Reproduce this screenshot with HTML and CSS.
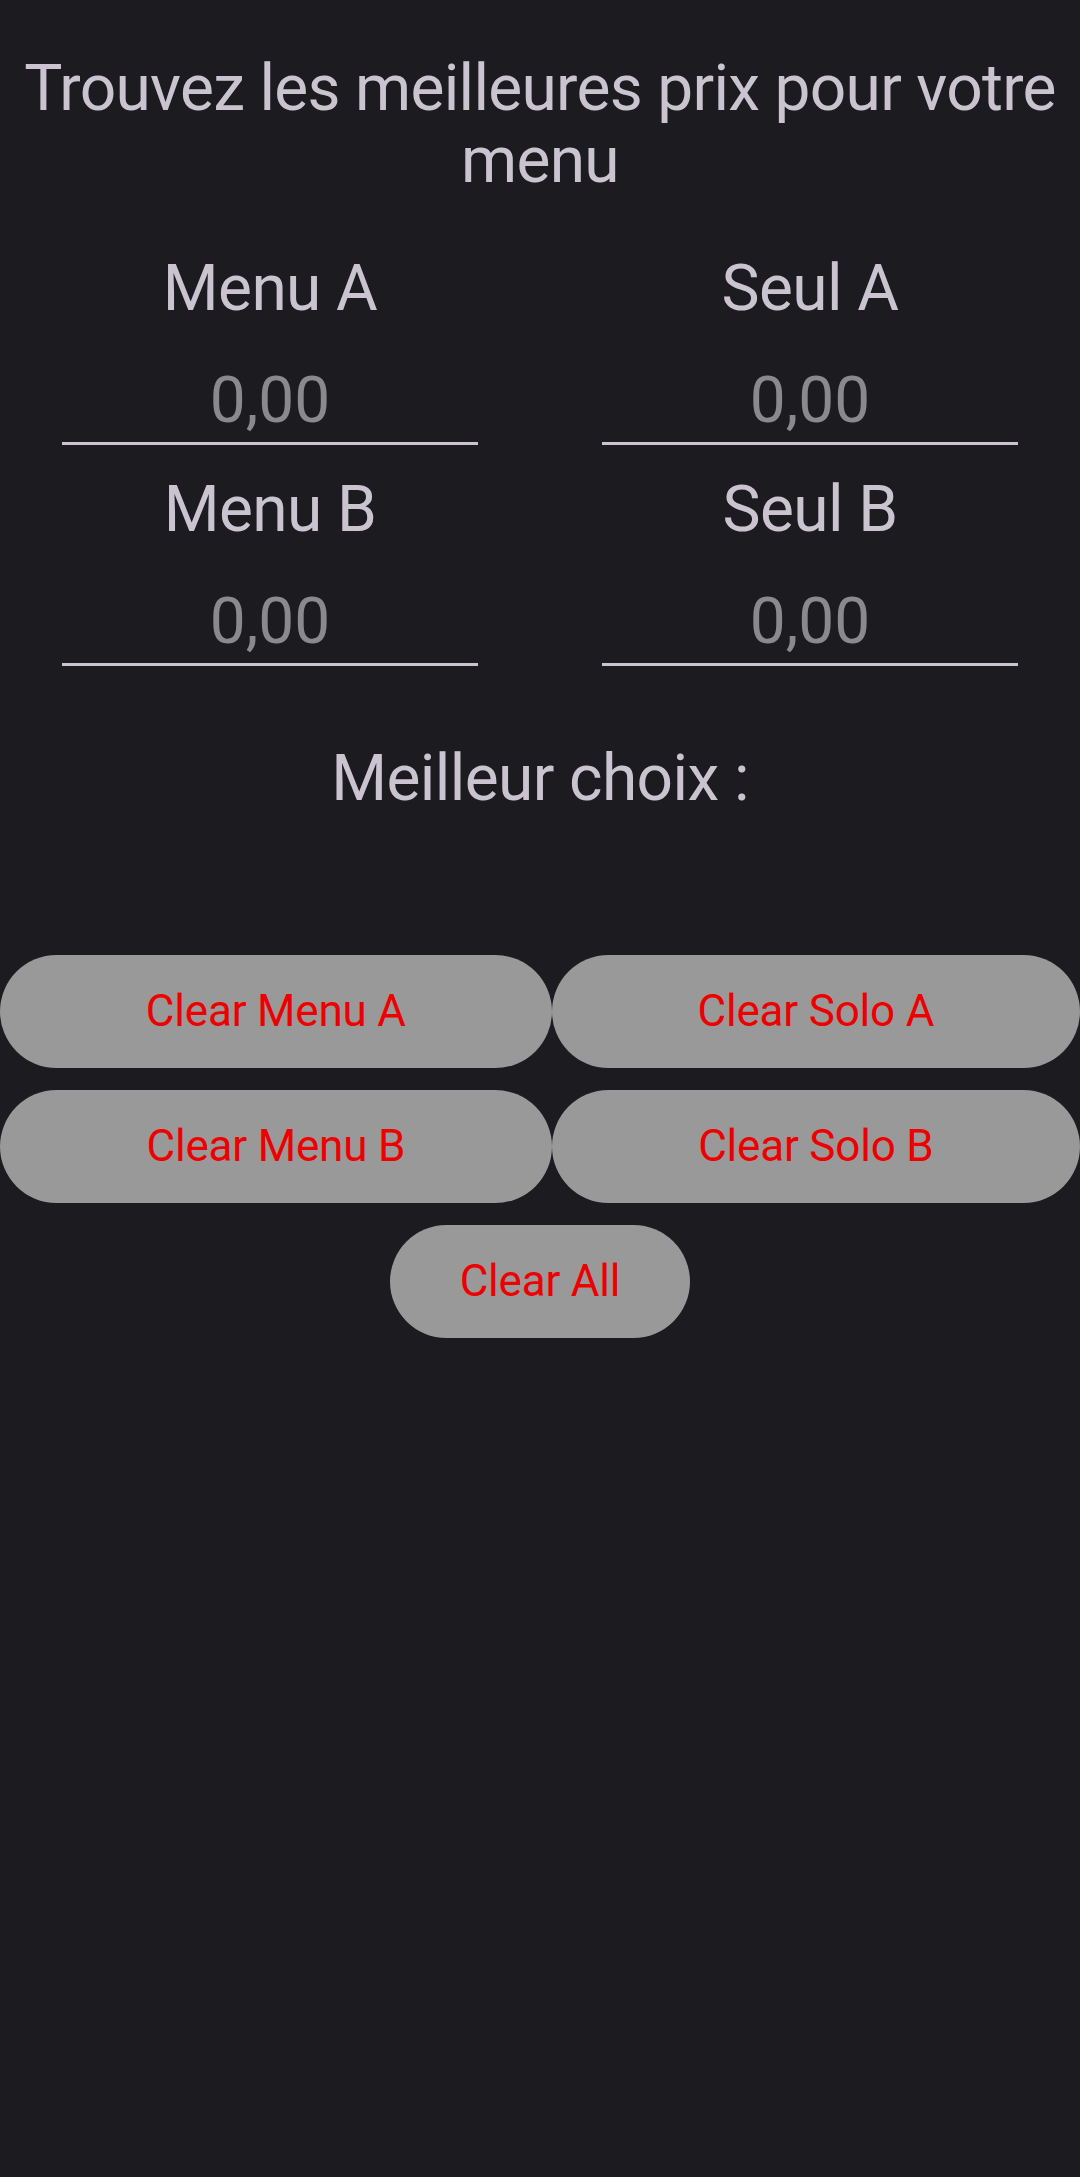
FILE: index.html
```html
<!DOCTYPE html>
<html lang="fr">
<head>
<meta charset="utf-8">
<title>Meilleur prix</title>
<link rel="stylesheet" href="styles.css">
</head>
<body>
<main class="app">
  <h1 class="title">Trouvez les meilleures prix pour votre menu</h1>
  <section class="fields">
    <div class="field">
      <label class="field-label" for="menuA">Menu A</label>
      <input class="field-input" id="menuA" type="text" inputmode="decimal" placeholder="0,00">
    </div>
    <div class="field">
      <label class="field-label" for="seulA">Seul A</label>
      <input class="field-input" id="seulA" type="text" inputmode="decimal" placeholder="0,00">
    </div>
    <div class="field">
      <label class="field-label" for="menuB">Menu B</label>
      <input class="field-input" id="menuB" type="text" inputmode="decimal" placeholder="0,00">
    </div>
    <div class="field">
      <label class="field-label" for="seulB">Seul B</label>
      <input class="field-input" id="seulB" type="text" inputmode="decimal" placeholder="0,00">
    </div>
  </section>
  <h2 class="result-title">Meilleur choix :</h2>
  <p class="result"></p>
  <section class="actions">
    <div class="action-row">
      <button class="btn" type="button">Clear Menu A</button>
      <button class="btn" type="button">Clear Solo A</button>
    </div>
    <div class="action-row">
      <button class="btn" type="button">Clear Menu B</button>
      <button class="btn" type="button">Clear Solo B</button>
    </div>
    <div class="action-row center">
      <button class="btn btn-all" type="button">Clear All</button>
    </div>
  </section>
</main>
</body>
</html>
```
FILE: styles.css
```css
html, body {
  margin: 0;
  padding: 0;
  background: #1c1b20;
}
body {
  width: 1080px;
  min-height: 2177px;
  font-family: Roboto, "Noto Sans", sans-serif;
  color: #cac4d0;
}
.app {
  display: flex;
  flex-direction: column;
}
.title {
  margin: 53px 0 0;
  font-size: 64px;
  font-weight: 400;
  line-height: 72px;
  letter-spacing: -0.7px;
  text-align: center;
}
.fields {
  margin-top: 52px;
  display: grid;
  grid-template-columns: 540px 540px;
  row-gap: 25px;
}
.field {
  display: flex;
  flex-direction: column;
  align-items: center;
  gap: 30px;
}
.field-label {
  font-size: 64px;
  line-height: 80px;
  height: 80px;
  letter-spacing: -0.6px;
}
.field-input {
  box-sizing: content-box;
  width: 416px;
  height: 83px;
  padding: 0;
  margin: 0;
  border: none;
  border-bottom: 3px solid #cac4d0;
  background: transparent;
  outline: none;
  font-family: inherit;
  font-size: 64px;
  line-height: 83px;
  color: #cac4d0;
  text-align: center;
}
.field-input::placeholder {
  color: #8a8a8c;
  opacity: 1;
}
.result-title {
  margin: 73px 0 0;
  font-size: 64px;
  font-weight: 400;
  line-height: 80px;
  letter-spacing: -0.6px;
  text-align: center;
}
.result {
  margin: 0;
  height: 136px;
}
.actions {
  display: flex;
  flex-direction: column;
  gap: 22px;
}
.action-row {
  display: flex;
}
.action-row.center {
  justify-content: center;
}
.btn {
  flex: 1 1 auto;
  height: 113px;
  padding: 0 69px;
  border: none;
  border-radius: 57px;
  background: #999999;
  color: #ee0000;
  font-family: inherit;
  font-size: 44px;
  line-height: 113px;
  letter-spacing: -0.2px;
}
.btn-all {
  flex: 0 0 auto;
  padding: 0 70px;
}
```
